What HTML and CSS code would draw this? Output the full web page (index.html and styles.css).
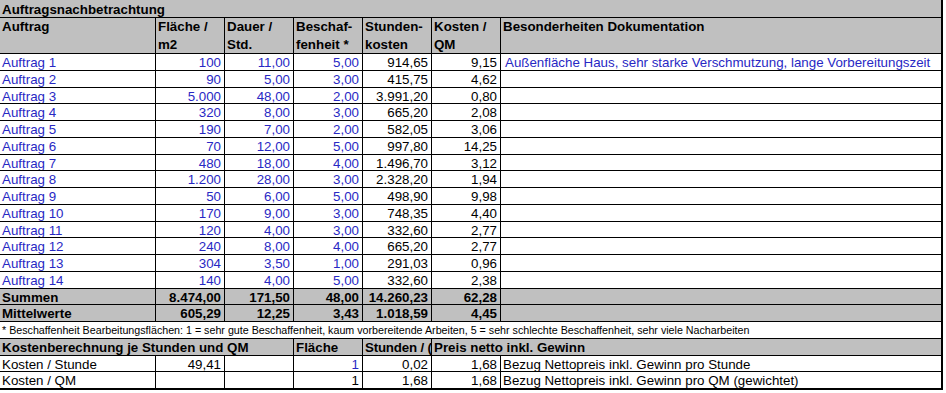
FILE: index.html
```html
<!DOCTYPE html>
<html lang="de">
<head>
<meta charset="utf-8">
<title>Auftragsnachbetrachtung</title>
<link rel="stylesheet" href="styles.css">
</head>
<body>
<div class="sheet">
  <div class="c gray b title all">Auftragsnachbetrachtung</div>

  <div class="c gray b hd">Auftrag</div>
  <div class="c gray b hd">Fläche /<br>m2</div>
  <div class="c gray b hd">Dauer /<br>Std.</div>
  <div class="c gray b hd">Beschaf-<br>fenheit *</div>
  <div class="c gray b hd">Stunden-<br>kosten</div>
  <div class="c gray b hd">Kosten /<br>QM</div>
  <div class="c gray b hd">Besonderheiten Dokumentation</div>

  <div class="c blue">Auftrag 1</div><div class="c blue r">100</div><div class="c blue r">11,00</div><div class="c blue r">5,00</div><div class="c r">914,65</div><div class="c r">9,15</div><div class="c blue note">Außenfläche Haus, sehr starke Verschmutzung, lange Vorbereitungszeit</div>
  <div class="c blue">Auftrag 2</div><div class="c blue r">90</div><div class="c blue r">5,00</div><div class="c blue r">3,00</div><div class="c r">415,75</div><div class="c r">4,62</div><div class="c"></div>
  <div class="c blue">Auftrag 3</div><div class="c blue r">5.000</div><div class="c blue r">48,00</div><div class="c blue r">2,00</div><div class="c r">3.991,20</div><div class="c r">0,80</div><div class="c"></div>
  <div class="c blue">Auftrag 4</div><div class="c blue r">320</div><div class="c blue r">8,00</div><div class="c blue r">3,00</div><div class="c r">665,20</div><div class="c r">2,08</div><div class="c"></div>
  <div class="c blue">Auftrag 5</div><div class="c blue r">190</div><div class="c blue r">7,00</div><div class="c blue r">2,00</div><div class="c r">582,05</div><div class="c r">3,06</div><div class="c"></div>
  <div class="c blue">Auftrag 6</div><div class="c blue r">70</div><div class="c blue r">12,00</div><div class="c blue r">5,00</div><div class="c r">997,80</div><div class="c r">14,25</div><div class="c"></div>
  <div class="c blue">Auftrag 7</div><div class="c blue r">480</div><div class="c blue r">18,00</div><div class="c blue r">4,00</div><div class="c r">1.496,70</div><div class="c r">3,12</div><div class="c"></div>
  <div class="c blue">Auftrag 8</div><div class="c blue r">1.200</div><div class="c blue r">28,00</div><div class="c blue r">3,00</div><div class="c r">2.328,20</div><div class="c r">1,94</div><div class="c"></div>
  <div class="c blue">Auftrag 9</div><div class="c blue r">50</div><div class="c blue r">6,00</div><div class="c blue r">5,00</div><div class="c r">498,90</div><div class="c r">9,98</div><div class="c"></div>
  <div class="c blue">Auftrag 10</div><div class="c blue r">170</div><div class="c blue r">9,00</div><div class="c blue r">3,00</div><div class="c r">748,35</div><div class="c r">4,40</div><div class="c"></div>
  <div class="c blue">Auftrag 11</div><div class="c blue r">120</div><div class="c blue r">4,00</div><div class="c blue r">3,00</div><div class="c r">332,60</div><div class="c r">2,77</div><div class="c"></div>
  <div class="c blue">Auftrag 12</div><div class="c blue r">240</div><div class="c blue r">8,00</div><div class="c blue r">4,00</div><div class="c r">665,20</div><div class="c r">2,77</div><div class="c"></div>
  <div class="c blue">Auftrag 13</div><div class="c blue r">304</div><div class="c blue r">3,50</div><div class="c blue r">1,00</div><div class="c r">291,03</div><div class="c r">0,96</div><div class="c"></div>
  <div class="c blue">Auftrag 14</div><div class="c blue r">140</div><div class="c blue r">4,00</div><div class="c blue r">5,00</div><div class="c r">332,60</div><div class="c r">2,38</div><div class="c"></div>

  <div class="c gray b">Summen</div><div class="c gray b r">8.474,00</div><div class="c gray b r">171,50</div><div class="c gray b r">48,00</div><div class="c gray b r">14.260,23</div><div class="c gray b r">62,28</div><div class="c gray"></div>
  <div class="c gray b">Mittelwerte</div><div class="c gray b r">605,29</div><div class="c gray b r">12,25</div><div class="c gray b r">3,43</div><div class="c gray b r">1.018,59</div><div class="c gray b r">4,45</div><div class="c gray"></div>

  <div class="c foot all">* Beschaffenheit Bearbeitungsflächen: 1 = sehr gute Beschaffenheit, kaum vorbereitende Arbeiten, 5 = sehr schlechte Beschaffenheit, sehr viele Nacharbeiten</div>

  <div class="c gray b span3">Kostenberechnung je Stunden und QM</div>
  <div class="c gray b">Fläche</div>
  <div class="c gray b tight">Stunden / (</div>
  <div class="c gray b span2">Preis netto inkl. Gewinn</div>

  <div class="c">Kosten / Stunde</div><div class="c r">49,41</div><div class="c"></div><div class="c blue r">1</div><div class="c r">0,02</div><div class="c r">1,68</div><div class="c">Bezug Nettopreis inkl. Gewinn pro Stunde</div>
  <div class="c">Kosten / QM</div><div class="c"></div><div class="c"></div><div class="c r">1</div><div class="c r">1,68</div><div class="c r">1,68</div><div class="c">Bezug Nettopreis inkl. Gewinn pro QM (gewichtet)</div>
</div>
</body>
</html>
```
FILE: styles.css
```css
html, body {
  margin: 0;
  padding: 0;
  background: #fff;
}

body {
  font-family: "Liberation Sans", Arial, sans-serif;
  color: #000;
}

.sheet {
  display: grid;
  box-sizing: border-box;
  width: 943px;
  grid-template-columns: 155px repeat(5, 68px) 440px;
  grid-template-rows: 17px 35px repeat(20, 15.75px);
  gap: 1px;
  padding: 0 2px 2px 0;
  background: #000;
}

.c {
  background: #fff;
  font-size: 13.33px;
  line-height: 17px;
  padding: 0 3px 0 2px;
  white-space: nowrap;
  overflow: hidden;
}

.r {
  text-align: right;
}

.b {
  font-weight: bold;
}

.blue {
  color: #2828c4;
}

.gray {
  background: #c0c0c0;
}

.all {
  grid-column: 1 / -1;
}

.span3 {
  grid-column: 1 / 4;
}

.span2 {
  grid-column: 6 / 8;
}

.title {
  line-height: 15px;
  padding-top: 2px;
}

.hd {
  line-height: 18px;
  white-space: normal;
}

.note {
  padding-left: 4px;
}

.tight {
  padding: 0 0 0 2px;
  letter-spacing: -0.2px;
}

.foot {
  font-size: 10.7px;
  line-height: 16px;
}
```
